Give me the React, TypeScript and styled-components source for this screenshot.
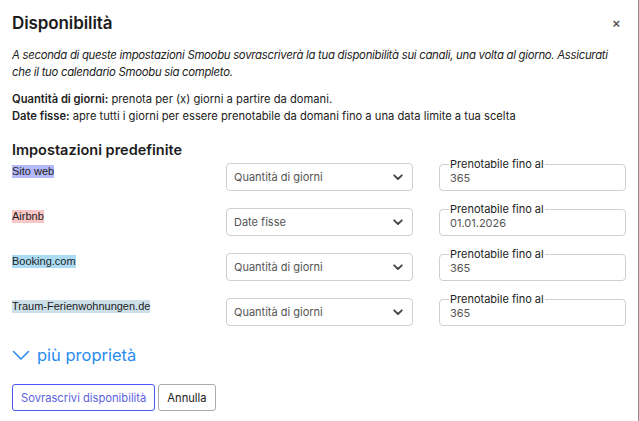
import React from "react";
import styled, { createGlobalStyle } from "styled-components";

const Global = createGlobalStyle`
  html, body { margin: 0; padding: 0; background: #fff; }
  body { font-family: Inter, "Open Sans", sans-serif; color: #222; }
  * { box-sizing: border-box; }
`;

const Modal = styled.div`
  width: 639px;
  height: 421px;
  border-right: 1px solid #8a8a8a;
  padding: 11px 12px 0 12px;
  background: #fff;
`;

const Header = styled.div`
  display: flex;
  justify-content: space-between;
  align-items: center;
  height: 24px;
`;

const Title = styled.h1`
  margin: 0;
  font-size: 17px;
  font-weight: 600;
  color: #1c1c1c;
  letter-spacing: -0.1px;
`;

const Close = styled.button`
  border: none;
  background: none;
  padding: 0;
  margin-right: 6px;
  font-size: 13px;
  font-weight: 700;
  color: #555;
  cursor: pointer;
  line-height: 1;
`;

const Intro = styled.p`
  margin: 12px 0 0 0;
  font-size: 11.4px;
  letter-spacing: -0.3px;
  line-height: 17px;
  font-style: italic;
  color: #222;
`;

const Defs = styled.div`
  margin-top: 10px;
  font-size: 11.2px;
  line-height: 17px;
  color: #222;
  b { font-weight: 600; }
`;

const Section = styled.h2`
  margin: 16px 0 0 0;
  font-size: 14.5px;
  line-height: 18px;
  font-weight: 600;
  color: #1c1c1c;
`;

const Rows = styled.div`
  display: flex;
  flex-direction: column;
  gap: 13px;
`;

const Row = styled.div`
  display: grid;
  grid-template-columns: 188px 187px 187px;
  column-gap: 26px;
  align-items: start;
`;

const Channel = styled.span<{ $bg: string }>`
  justify-self: start;
  margin-top: 6px;
  font-family: "Liberation Sans", Arial, sans-serif;
  font-size: 11px;
  line-height: 13px;
  color: #222;
  background: ${(p) => p.$bg};
`;

const SelectBox = styled.div`
  margin-top: 4px;
  height: 28px;
  border: 1px solid #cfcfcf;
  border-radius: 4px;
  display: flex;
  align-items: center;
  justify-content: space-between;
  padding: 0 9px 0 7px;
  font-size: 11px;
  color: #555;
`;

const Field = styled.fieldset`
  margin: 0;
  min-width: 0;
  height: 32px;
  border: 1px solid #cfcfcf;
  border-radius: 4px;
  padding: 0 10px;
`;

const Legend = styled.legend`
  padding: 0 1px;
  margin-left: -1px;
  font-size: 11px;
  line-height: 11px;
  color: #222;
`;

const Value = styled.div`
  font-size: 11px;
  line-height: 14px;
  margin-top: 1px;
  color: #555;
`;

const More = styled.button`
  margin-top: 19px;
  display: flex;
  align-items: center;
  gap: 7px;
  border: none;
  background: none;
  padding: 0;
  font-family: Inter, sans-serif;
  font-size: 16.5px;
  color: #2a8cf0;
  cursor: pointer;
`;

const Actions = styled.div`
  margin-top: 19px;
  display: flex;
  gap: 3px;
`;

const Btn = styled.button<{ $primary?: boolean }>`
  height: 27px;
  padding: 0 8px;
  border-radius: 3px;
  background: #fff;
  font-family: Inter, sans-serif;
  font-size: 11.2px;
  border: 1px solid ${(p) => (p.$primary ? "#4a58f0" : "#aaa")};
  color: ${(p) => (p.$primary ? "#5b5fe0" : "#222")};
  cursor: pointer;
`;

const Chevron = () => (
  <svg width="10" height="7" viewBox="0 0 10 7">
    <path d="M1.2 1.3 L5 5 L8.8 1.3" fill="none" stroke="#444" strokeWidth="1.8" strokeLinecap="round" strokeLinejoin="round" />
  </svg>
);

const BigChevron = () => (
  <svg width="18" height="11" viewBox="0 0 18 11">
    <path d="M1.5 1.5 L9 9 L16.5 1.5" fill="none" stroke="#2a8cf0" strokeWidth="1.6" strokeLinecap="round" strokeLinejoin="round" />
  </svg>
);

const channels = [
  { name: "Sito web", bg: "#b4b9fb", mode: "Quantità di giorni", value: "365" },
  { name: "Airbnb", bg: "#f9c6c6", mode: "Date fisse", value: "01.01.2026" },
  { name: "Booking.com", bg: "#acdcf3", mode: "Quantità di giorni", value: "365" },
  { name: "Traum-Ferienwohnungen.de", bg: "#cddfe9", mode: "Quantità di giorni", value: "365" },
];

export default function App() {
  return (
    <>
      <Global />
      <Modal>
        <Header>
          <Title>Disponibilità</Title>
          <Close aria-label="close">×</Close>
        </Header>
        <Intro>
          A seconda di queste impostazioni Smoobu sovrascriverà la tua disponibilità sui canali, una volta al giorno. Assicurati
          <br />
          che il tuo calendario Smoobu sia completo.
        </Intro>
        <Defs>
          <div>
            <b>Quantità di giorni:</b> prenota per (x) giorni a partire da domani.
          </div>
          <div>
            <b>Date fisse:</b> apre tutti i giorni per essere prenotabile da domani fino a una data limite a tua scelta
          </div>
        </Defs>
        <Section>Impostazioni predefinite</Section>
        <Rows>
          {channels.map((c) => (
            <Row key={c.name}>
              <Channel $bg={c.bg}>{c.name}</Channel>
              <SelectBox>
                <span>{c.mode}</span>
                <Chevron />
              </SelectBox>
              <Field>
                <Legend>Prenotabile fino al</Legend>
                <Value>{c.value}</Value>
              </Field>
            </Row>
          ))}
        </Rows>
        <More>
          <BigChevron />
          più proprietà
        </More>
        <Actions>
          <Btn $primary>Sovrascrivi disponibilità</Btn>
          <Btn>Annulla</Btn>
        </Actions>
      </Modal>
    </>
  );
}
